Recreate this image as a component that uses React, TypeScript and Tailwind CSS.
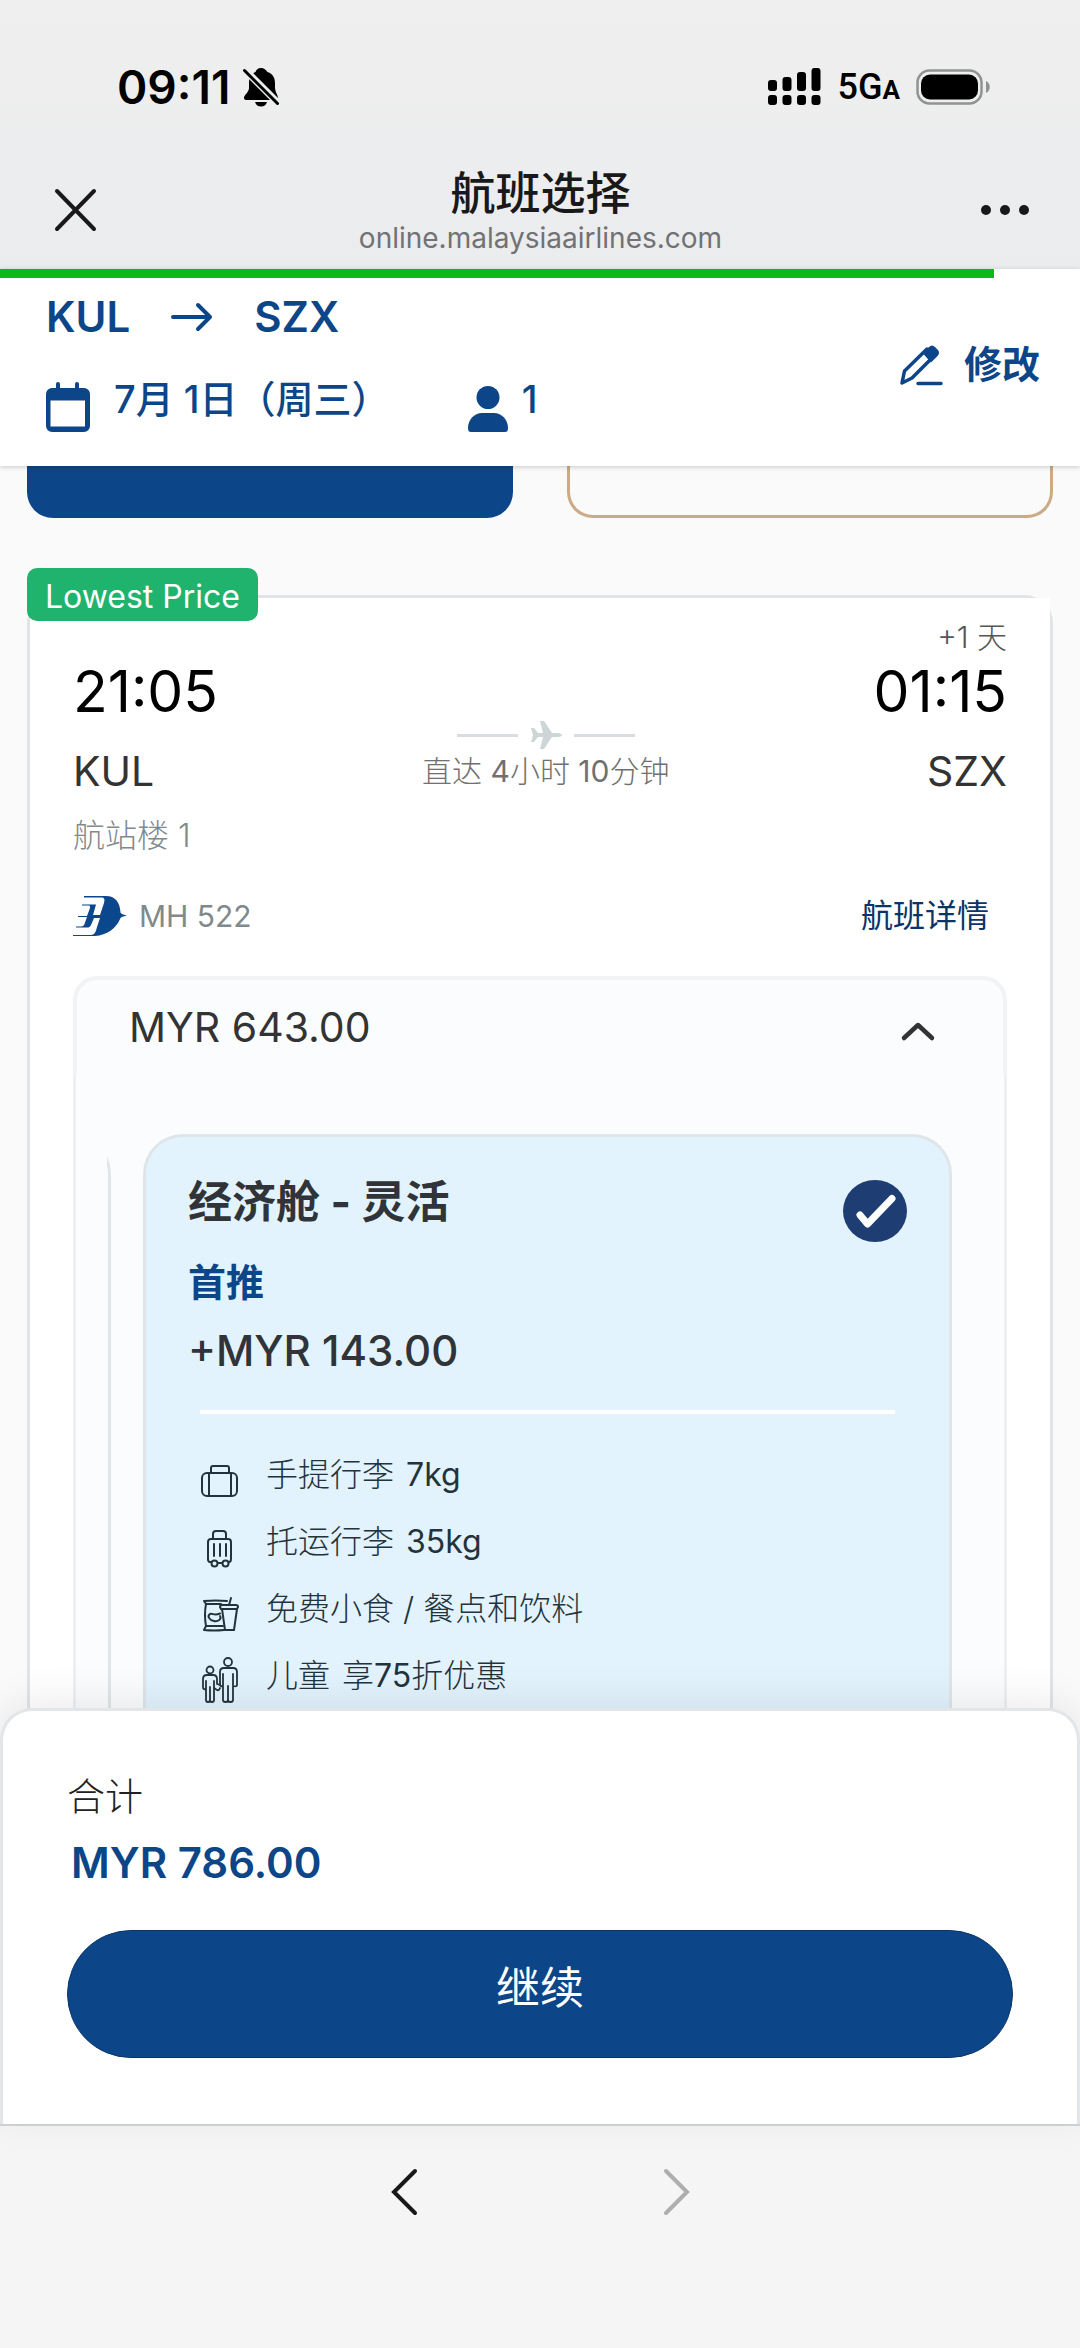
import { useState } from "react";

const perks = [
  { icon: <CabinBagIcon />, text: "手提行李", value: <Latin>7kg</Latin> },
  { icon: <LuggageIcon />, text: "托运行李", value: <Latin>35kg</Latin> },
  { icon: <SnackIcon />, text: "免费小食 / 餐点和饮料" },
  {
    icon: <FamilyIcon />,
    text: "儿童",
    value: (
      <>
        享<Latin>75</Latin>折优惠
      </>
    ),
  },
];

// digits and units are one weight up from the light chinese text
function Latin({ children }: { children: React.ReactNode }) {
  return <span className="font-normal">{children}</span>;
}

function BellOffIcon() {
  return (
    <svg width="38" height="40" viewBox="0 0 38 40" aria-hidden="true">
      <path
        d="M19 1c-3 0-5 2-5.500 4C9 7 7 11 7 16v5c0 4-5 7-5 10 0 1 1 2 2 2h30c1 0 2-1 2-2 0-3-3-6-3-10v-5c0-5-2-9-7.500-11C24 3 22 1 19 1z"
        fill="black"
      />
      <path d="M13 35h12c-1 3-3 4.500-6 4.500S14 38 13 35z" fill="black" />
      <path d="M3 3l34 34" stroke="#ebedee" strokeWidth="7" />
      <path
        d="M2.500 3.500l33 33"
        stroke="black"
        strokeWidth="3"
        strokeLinecap="round"
      />
    </svg>
  );
}

function SignalIcon() {
  return (
    <svg width="54" height="38" viewBox="0 0 54 38" aria-hidden="true">
      <rect x="0" y="12" width="9" height="11" rx="3" />
      <rect x="14.500" y="9" width="9" height="14" rx="3" />
      <rect x="29" y="4" width="9" height="19" rx="3" />
      <rect x="43.500" y="0" width="9" height="23" rx="3" />
      <rect x="0" y="27" width="9" height="10" rx="3" />
      <rect x="14.500" y="27" width="9" height="10" rx="3" />
      <rect x="29" y="27" width="9" height="10" rx="3" />
      <rect x="43.500" y="27" width="9" height="10" rx="3" />
    </svg>
  );
}

function BatteryIcon() {
  return (
    <svg width="76" height="36" viewBox="0 0 76 36" aria-hidden="true">
      <rect
        x="1.500"
        y="1.500"
        width="64"
        height="33"
        rx="12"
        fill="none"
        stroke="#909293"
        strokeWidth="2.500"
      />
      <rect x="5" y="5.500" width="57" height="25" rx="9" />
      <path d="M70 12c5 2 5 10 0 12z" fill="#909293" />
    </svg>
  );
}

function CalendarIcon() {
  return (
    <svg width="44" height="54" viewBox="0 0 44 54" aria-hidden="true">
      <path
        d="M6 8h4V4a2 2 0 0 1 4 0v4h15V4a2 2 0 0 1 4 0v4h5a6 6 0 0 1 6 6v32a6 6 0 0 1-6 6H6a6 6 0 0 1-6-6V14a6 6 0 0 1 6-6zM4.500 20.500v26h34.500v-26z"
        fillRule="evenodd"
        fill="#0d4688"
      />
    </svg>
  );
}

function PersonIcon() {
  return (
    <svg width="40" height="54" viewBox="0 0 40 54" aria-hidden="true">
      <circle cx="20" cy="17.500" r="11.500" fill="#0d4688" />
      <path
        d="M0 48c0-8 6-15 14-15h12c8 0 14 7 14 15 0 3-1 4-3 4H3c-2 0-3-1-3-4z"
        fill="#0d4688"
      />
    </svg>
  );
}

function PencilIcon() {
  return (
    <svg width="44" height="46" viewBox="0 0 44 46" aria-hidden="true">
      <path
        d="M2 42l2.500-12L27 8l7 7-22 22zM18 42.500h23"
        fill="none"
        stroke="#0d4688"
        strokeWidth="3.500"
        strokeLinecap="round"
        strokeLinejoin="round"
      />
      <path
        d="M22.500 12L29 6c2-2 4-2 6 0l2.500 2.500c2 2 2 4.500 0 6.500L31 21.500z"
        fill="#0d4688"
      />
    </svg>
  );
}

function PlaneIcon() {
  return (
    <svg width="32" height="28" viewBox="0 0 32 28" aria-hidden="true">
      <path
        d="M1 7h3l4 5h5L10 0h4l8 12h6c2 0 4 1 4 2s-2 2-4 2h-6l-8 12h-4l3-12H8l-4 5H1l2-7z"
        fill="#ced5d7"
      />
    </svg>
  );
}

function AirlineLogo() {
  return (
    <svg width="54" height="42" viewBox="0 0 54 42" aria-hidden="true">
      <path
        d="M11 1h22c9 0 14 6 14.500 16.500 0 1.500 5 2.500 6 3-1 .5-5 1-6 2.500C43 34 34 40 22 41H0v-1h18c4 0 5-4 6-8l3-9h-6l-3 7c-1 2-2 2.500-4 2.500H3v-1h5c2 0 3-1 3.500-2.500L14 22H5v-1h9l3-8c.5-2-.5-2.500-2-2.500H9v-1h14L20 20h7l4-12c1-4 .5-5.500-3-5.500H11z"
        fill="#0b478c"
      />
    </svg>
  );
}

function CabinBagIcon() {
  return (
    <svg
      width="40"
      height="60"
      viewBox="0 0 40 60"
      fill="none"
      stroke="#24333b"
      strokeWidth="2"
      aria-hidden="true">
      <rect x="2" y="28" width="35" height="23" rx="5" />
      <path d="M11 28v-5q0-2 2-2h14q2 0 2 2v5M9 28v23M31 28v23" />
    </svg>
  );
}

function LuggageIcon() {
  return (
    <svg
      width="40"
      height="60"
      viewBox="0 0 40 60"
      fill="none"
      stroke="#24333b"
      strokeWidth="2"
      strokeLinecap="round"
      aria-hidden="true">
      <path d="M11 50h-1q-2 0-2-3V30q0-3 3-3h17q3 0 3 3v17q0 3-2 3M18 51h4" />
      <path d="M13 27v-5q0-3 3-3h7q3 0 3 3v5M14 32v12M20 32v12M26 32v12" />
      <circle cx="14.500" cy="51.500" r="3" />
      <circle cx="25.500" cy="51.500" r="3" />
    </svg>
  );
}

function SnackIcon() {
  return (
    <svg
      width="40"
      height="60"
      viewBox="0 0 40 60"
      fill="none"
      stroke="#24333b"
      strokeWidth="2"
      strokeLinecap="round"
      strokeLinejoin="round"
      aria-hidden="true">
      <path d="M27 22q-11-1-23 0l2 3q-2 11 0 22l-2 4q10 1 20 0M6 25h15M6 47h17" />
      <path d="M20 37c2 3-2 6-6 5-5-1-7-5-4-7 3-1 4 2 10-.5" />
      <path d="M21 30l-1-2q0-2 2-2h14q2 0 2 2l-1 2zM22 30l3 21h9l3-21M29 26l2-7" />
    </svg>
  );
}

function FamilyIcon() {
  return (
    <svg
      width="40"
      height="60"
      viewBox="0 0 40 60"
      fill="none"
      stroke="#24333b"
      strokeWidth="1.800"
      strokeLinecap="round"
      strokeLinejoin="round"
      aria-hidden="true">
      <circle cx="10" cy="24" r="3.500" />
      <circle cx="28" cy="16" r="4" />
      <path d="M6 35v19q0 2 2 2t2-2V41v13q0 2 2 2t2-2V35M6 43q-3 1-3-2v-8q0-4 4-4h6q4 0 4 4v5l3 1" />
      <path d="M23 28v26q0 2 2.500 2t2.500-2V40v14q0 2 2.500 2t2.500-2V28M20 42q-1 3-3 2l-3-2M23 40q-3 1-3-2V26q0-4 4-4h9q4 0 4 4v13q0 2-4 1" />
    </svg>
  );
}

function BrowserHeader() {
  return (
    <header className="bg-gradient-to-b from-[#efefef] to-[#ebecee]">
      <div className="flex h-[110px] items-center justify-between pt-16 pl-[117px] pr-[88px]">
        <div className="flex items-center gap-3">
          <span className="text-[46px] leading-[46px] font-semibold text-black">
            09:11
          </span>
          <BellOffIcon />
        </div>
        <div className="flex items-center">
          <SignalIcon />
          <span className="ml-4 font-[Roboto] text-4xl leading-[46px] font-medium text-black">
            5G<span className="text-[26px] leading-none font-bold">A</span>
          </span>
          <span className="ml-4">
            <BatteryIcon />
          </span>
        </div>
      </div>

      <div className="flex items-center justify-between pt-14 pr-[50px] pb-[15px] pl-[49px]">
        <button type="button" aria-label="关闭" className="w-[52px]">
          <svg width="52" height="52" viewBox="0 0 52 52" aria-hidden="true">
            <path
              d="M8 7l37 38M45 7L8 45"
              stroke="#191919"
              strokeWidth="4"
              strokeLinecap="round"
            />
          </svg>
        </button>
        <div className="flex flex-col items-center">
          <h1 className="text-[45px] leading-[56px] font-medium text-[#191919]">
            航班选择
          </h1>
          <p className="text-[28px] leading-8 text-[#717273]">
            online.malaysiaairlines.com
          </p>
        </div>
        <button type="button" aria-label="更多">
          <svg width="50" height="12" viewBox="0 0 50 12" aria-hidden="true">
            <circle cx="6" cy="6" r="5" fill="#191919" />
            <circle cx="25" cy="6" r="5" fill="#191919" />
            <circle cx="44" cy="6" r="5" fill="#191919" />
          </svg>
        </button>
      </div>
    </header>
  );
}

function TripSummary() {
  return (
    <section className="relative z-10 bg-white shadow-[0_1px_5px_rgba(0,0,0,0.2)]">
      <div className="h-[9px] w-[92%] bg-[#0abb17]" />
      <div className="flex items-center justify-between pt-4 pb-8 pl-[46px] pr-10 text-[#0d4688]">
        <div>
          <div className="flex items-center gap-10 text-[42px] leading-[46px] font-semibold">
            <span>KUL</span>
            <svg width="44" height="30" viewBox="0 0 44 30" aria-hidden="true">
              <path
                d="M3 15h37M28 3l12 12-12 12"
                fill="none"
                stroke="#0d4688"
                strokeWidth="4"
                strokeLinecap="round"
                strokeLinejoin="round"
              />
            </svg>
            <span>SZX</span>
          </div>
          <div className="mt-10 flex items-start text-[38px] leading-[38px] font-medium">
            <CalendarIcon />
            <span className="ml-6">7月 1日（周三）</span>
            <span className="ml-[78px] flex gap-3.5">
              <PersonIcon />
              <span>1</span>
            </span>
          </div>
        </div>
        <button
          type="button"
          className="flex items-center gap-5 text-[38px] leading-[46px] font-bold">
          <PencilIcon />
          修改
        </button>
      </div>
    </section>
  );
}

function FlightRoute() {
  return (
    <div className="flex items-start justify-between pt-5">
      <div className="pt-[38px]">
        <p className="text-[57px] leading-[72px] text-black">21:05</p>
        <p className="mt-4 text-[41px] leading-[54px] text-[#333]">KUL</p>
        <p className="mt-[18px] text-[32px] leading-10 font-light text-[#7f8a8d]">
          航站楼 1
        </p>
      </div>
      <div className="flex flex-col items-center gap-2 pt-[103px]">
        <div className="flex items-center gap-3">
          <span className="h-[3px] w-[61px] bg-[#d9dddf]" />
          <PlaneIcon />
          <span className="h-[3px] w-[61px] bg-[#d9dddf]" />
        </div>
        <p className="text-[30px] leading-7 font-light text-[#707070]">
          直达 <Latin>4</Latin>小时 <Latin>10</Latin>分钟
        </p>
      </div>
      <div className="text-right">
        <p className="text-[30px] leading-[38px] font-light text-[#555]">
          +1 天
        </p>
        <p className="text-[57px] leading-[72px] text-black">01:15</p>
        <p className="mt-4 text-[41px] leading-[54px] text-[#333]">SZX</p>
      </div>
    </div>
  );
}

function FareCard() {
  const [checked, setChecked] = useState(true);

  return (
    <div className="flex-1 rounded-t-[40px] border-[3px] border-b-0 border-[#dfe6e9] bg-[#e2f3fd] px-[42px] pt-[43px] pb-40">
      <div className="flex items-start justify-between">
        <div>
          <h2 className="text-[44px] leading-[44px] font-bold text-[#303438]">
            经济舱 - 灵活
          </h2>
          <p className="mt-8 text-[38px] leading-[52px] font-bold text-[#0d4688]">
            首推
          </p>
          <p className="mt-4 text-[42px] leading-[54px] font-medium text-[#303438]">
            +MYR 143.00
          </p>
        </div>
        <label>
          <input
            type="radio"
            name="fare"
            aria-label="经济舱 - 灵活"
            checked={checked}
            onChange={() => setChecked(true)}
            className="sr-only"
          />
          <svg width="64" height="62" viewBox="0 0 64 62" aria-hidden="true">
            <ellipse cx="32" cy="31" rx="32" ry="31" fill="#1d3d73" />
            <path
              d="M17 35l7.500 9L49 18.500"
              fill="none"
              stroke="white"
              strokeWidth="7"
              strokeLinecap="round"
              strokeLinejoin="round"
            />
          </svg>
        </label>
      </div>
      <hr className="mx-3 mt-8 border-t-4 border-white" />
      <ul className="mt-[27px] ml-3">
        {perks.map((perk) => (
          <li
            key={perk.text}
            className="flex h-[67px] items-center gap-[26px] text-[#24333b]">
            {perk.icon}
            <span className="flex gap-3 text-[32px] leading-10 font-light">
              {perk.text}
              {perk.value && <span>{perk.value}</span>}
            </span>
          </li>
        ))}
      </ul>
    </div>
  );
}

function FlightCard() {
  return (
    <article className="relative mt-[77px] rounded-t-[28px] border-[3px] border-b-0 border-[#e1e5e7]">
      <span className="absolute -top-[30px] -left-[3px] rounded-[10px] bg-[#20b36d] px-[18px] pt-1 text-[32px] leading-[49px] text-white">
        Lowest Price
      </span>
      <div className="bg-white px-[43px]">
        <FlightRoute />
        <div className="mt-10 flex h-10 items-center justify-between pr-[18px]">
          <div className="flex items-center gap-3">
            <AirlineLogo />
            <span className="text-[30px] leading-10 text-[#7f8a8d]">
              MH 522
            </span>
          </div>
          <a href="#details" className="text-[32px] leading-10 text-[#0b3567]">
            航班详情
          </a>
        </div>

        <div className="mt-10 rounded-t-3xl bg-[#fafcfd]">
          <button
            type="button"
            aria-expanded="true"
            className="flex w-full items-center justify-between rounded-t-3xl border-4 border-b-0 border-[#f1f3f4] pl-[52px] pr-[61px] text-[41px] leading-[94px] text-[#333]">
            MYR 643.00
            <svg width="48" height="48" viewBox="0 0 48 48" aria-hidden="true">
              <path
                d="M10 35l14-13 14 13"
                fill="none"
                stroke="#333"
                strokeWidth="4.500"
                strokeLinecap="round"
                strokeLinejoin="round"
              />
            </svg>
          </button>
          <div className="flex gap-8 border-x-[3px] border-[#eef1f3] pt-[60px] pl-[31px] pr-[52px]">
            {/* edge of the previous fare in the carousel */}
            <div className="flex w-1 justify-end overflow-hidden">
              <div className="w-24 shrink-0 rounded-t-[40px] border-[3px] border-b-0 border-[#e1e5e7]" />
            </div>
            <FareCard />
          </div>
        </div>
      </div>
    </article>
  );
}

function TotalSheet() {
  return (
    <section className="relative z-10 -mt-10 rounded-t-[32px] border-[3px] border-b-0 border-[#e3e6e8] bg-white px-16 pt-[61px] pb-[66px] shadow-[0_-8px_40px_rgba(0,0,0,0.08)]">
      <p className="text-[38px] leading-[48px] font-light text-[#222]">合计</p>
      <p className="mt-4 pl-1 text-[42px] leading-[54px] font-semibold text-[#0d4688]">
        MYR 786.00
      </p>
      <button
        type="button"
        className="mt-10 h-32 w-full rounded-full border border-[#0a3468] bg-[#0d4688] pb-3 text-[44px] text-white">
        继续
      </button>
    </section>
  );
}

function BrowserFooter() {
  return (
    <nav className="flex h-[224px] items-start justify-center gap-[224px] border-t-2 border-[#d0d4d5] bg-[#f5f5f5] pt-10">
      <button type="button" aria-label="后退">
        <svg width="48" height="52" viewBox="0 0 48 52" aria-hidden="true">
          <path
            d="M35 5L14 26l21 21"
            fill="none"
            stroke="#191919"
            strokeWidth="4"
            strokeLinecap="round"
          />
        </svg>
      </button>
      <button type="button" aria-label="前进" disabled>
        <svg width="48" height="52" viewBox="0 0 48 52" aria-hidden="true">
          <path
            d="M14 5l21 21-21 21"
            fill="none"
            stroke="#aeaeae"
            strokeWidth="4"
            strokeLinecap="round"
          />
        </svg>
      </button>
    </nav>
  );
}

export default function App() {
  return (
    <div className="flex h-screen flex-col bg-[#fafafa] font-[Inter,'Noto_Sans_CJK_SC',sans-serif]">
      <BrowserHeader />
      <TripSummary />
      <main className="min-h-0 flex-1 overflow-hidden px-[27px]">
        <div className="grid grid-cols-2 gap-[54px]">
          <div className="h-[52px] rounded-b-[26px] bg-[#0d4688]" />
          <div className="h-[52px] rounded-b-[26px] border-[3px] border-t-0 border-[#cbaa84]" />
        </div>
        <FlightCard />
      </main>
      <TotalSheet />
      <BrowserFooter />
    </div>
  );
}
